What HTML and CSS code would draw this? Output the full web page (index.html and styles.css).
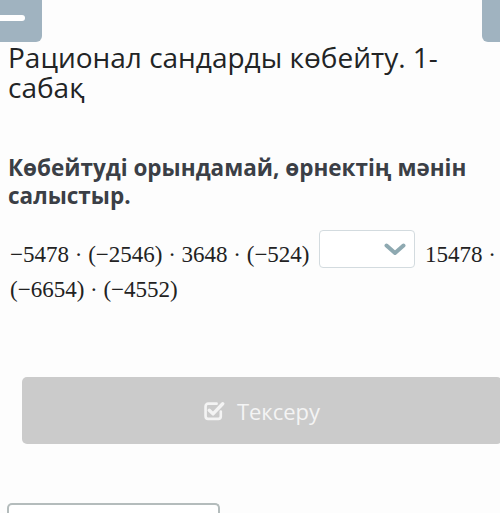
FILE: index.html
```html
<!DOCTYPE html>
<html lang="kk">
<head>
<meta charset="utf-8">
<link rel="stylesheet" href="styles.css">
</head>
<body>
<div class="page">
  <div class="topbar">
    <div class="menu-btn"><span class="menu-line"></span></div>
    <div class="side-btn"></div>
  </div>
  <h1 class="title">Рационал сандарды көбейту. 1-сабақ</h1>
  <p class="task">Көбейтуді орындамай, өрнектің мәнін салыстыр.</p>
  <div class="math">
    <span class="expr">−5478 · (−2546) · 3648 · (−524)</span>
    <span class="select"><svg class="chev" width="22" height="13" viewBox="0 0 22 13"><path d="M2.5 2.5 L11 10 L19.5 2.5" fill="none" stroke="#8ea9b1" stroke-width="4" stroke-linecap="round" stroke-linejoin="round"/></svg></span>
    <span class="expr">15478 · (−6654) · (−4552)</span>
  </div>
  <div class="check-btn">
    <svg class="check-icon" width="21" height="21" viewBox="0 0 20 20">
      <path d="M16 11 V15.5 a2.5 2.5 0 0 1 -2.5 2.5 H4 A2.5 2.5 0 0 1 1.5 15.5 V6 A2.5 2.5 0 0 1 4 3.5 H12" fill="none" stroke="#f4f4f4" stroke-width="2.5" stroke-linecap="round"/>
      <path d="M5 9.8 L8.6 13.2 L17.8 3.6" fill="none" stroke="#f4f4f4" stroke-width="3.2" stroke-linecap="round" stroke-linejoin="round"/>
    </svg>
    <span class="check-text">Тексеру</span>
  </div>
  <div class="next-box"></div>
</div>
</body>
</html>
```
FILE: styles.css
```css
html, body {
  margin: 0;
  padding: 0;
  background: #fdfdfd;
}
body {
  width: 500px;
  height: 513px;
  overflow: hidden;
  font-family: "Open Sans", "Noto Sans", sans-serif;
}
.page {
  display: flex;
  flex-direction: column;
  height: 513px;
  overflow: hidden;
}
.topbar {
  display: flex;
  justify-content: space-between;
  height: 42px;
  flex-shrink: 0;
}
.menu-btn {
  width: 42px;
  height: 42px;
  background: #a0b3c0;
  border-bottom-right-radius: 6px;
  position: relative;
}
.menu-line {
  position: absolute;
  left: 0;
  top: 15px;
  width: 25px;
  height: 6px;
  background: #ffffff;
  border-radius: 0 3px 3px 0;
}
.side-btn {
  width: 18px;
  height: 42px;
  background: #a0b3c0;
  border-bottom-left-radius: 6px;
}
.title {
  margin: 0;
  padding: 0 20px 0 8px;
  font-weight: 400;
  font-size: 28px;
  line-height: 30px;
  color: #222425;
}
.task {
  margin: 52px 0 0 0;
  padding: 0 10px 0 8px;
  font-weight: 700;
  font-size: 22.5px;
  line-height: 28px;
  color: #3b3f46;
}
.math {
  margin: 20px 0 0 0;
  padding: 0 0 0 10px;
  font-family: "Liberation Serif", "DejaVu Serif", serif;
  font-size: 23px;
  line-height: 35px;
  color: #222;
}
.select {
  display: inline-block;
  box-sizing: border-box;
  width: 96px;
  height: 38px;
  margin: 0 4px;
  padding: 12px 8px 0 0;
  text-align: right;
  line-height: 0;
  border: 1.5px solid #d3dbdf;
  border-radius: 4px;
  background: #fff;
  overflow: hidden;
  vertical-align: -6px;
}
.chev {
  display: inline-block;
}
.check-btn {
  margin: 70px 0 0 22px;
  width: 480px;
  height: 67px;
  flex-shrink: 0;
  background: #cbcbcb;
  border-radius: 5px;
  display: flex;
  align-items: center;
  justify-content: center;
  gap: 12px;
  color: #f4f4f4;
}
.check-text {
  font-size: 22px;
  line-height: 30px;
}
.next-box {
  margin: 59px 0 0 7px;
  width: 213px;
  height: 10px;
  flex-shrink: 0;
  box-sizing: border-box;
  border: 2px solid #b4bcbc;
  border-bottom: none;
  border-radius: 5px 5px 0 0;
  background: #fff;
}
```
